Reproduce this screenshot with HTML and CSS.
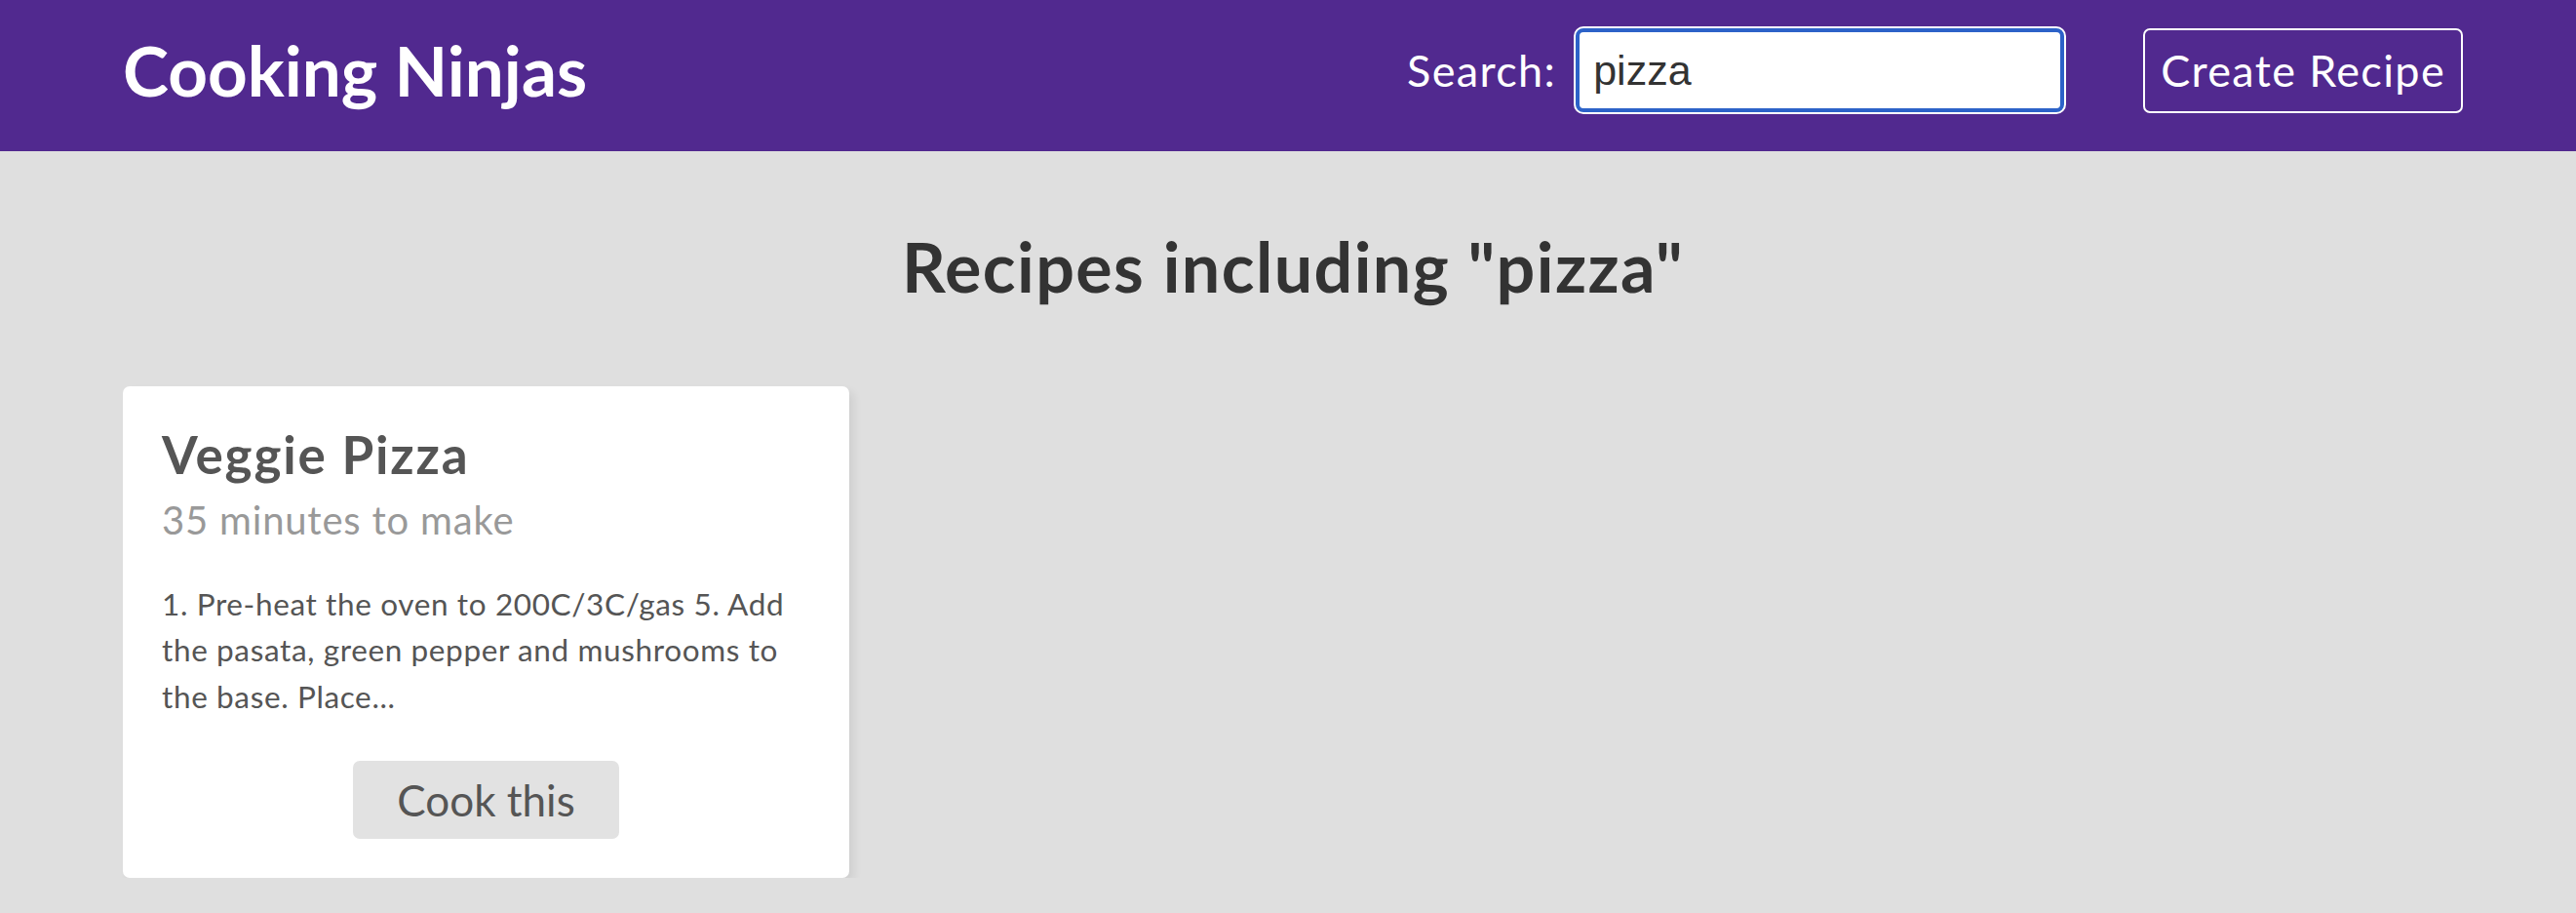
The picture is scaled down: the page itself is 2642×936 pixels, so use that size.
FILE: index.html
```html
<!DOCTYPE html>
<html lang="en">
<head>
<meta charset="utf-8">
<title>Cooking Ninjas</title>
<link rel="stylesheet" href="styles.css">
</head>
<body>
  <nav class="navbar">
    <div class="navbar-inner">
      <h1 class="logo">Cooking Ninjas</h1>
      <form class="searchbar">
        <label class="search-label" for="search">Search:</label>
        <input class="search-input" id="search" type="text" value="pizza">
      </form>
      <a class="create-btn" href="#">Create Recipe</a>
    </div>
  </nav>

  <main class="page">
    <h2 class="page-title">Recipes including "pizza"</h2>
    <div class="recipe-list">
      <div class="card">
        <h3 class="card-title">Veggie Pizza</h3>
        <p class="card-time">35 minutes to make</p>
        <p class="card-method">1. Pre-heat the oven to 200C/3C/gas 5. Add the pasata, green pepper and mushrooms to the base. Place...</p>
        <div class="card-actions">
          <a class="cook-btn" href="#">Cook this</a>
        </div>
      </div>
    </div>
  </main>
</body>
</html>
```

FILE: styles.css
```css
* {
  box-sizing: border-box;
}

html, body {
  margin: 0;
  padding: 0;
}

body {
  background: #dfdfdf;
  font-family: "Lato", "Open Sans", sans-serif;
  color: #333;
}

.navbar {
  background: #51298f;
  height: 155px;
  padding: 0 116px 11px 126px;
}

.navbar-inner {
  height: 100%;
  display: flex;
  align-items: center;
}

.logo {
  margin: 0;
  font-size: 71px;
  line-height: 1.2;
  font-weight: 700;
  color: #fff;
}

.searchbar {
  margin: 0 0 0 auto;
  display: flex;
  align-items: center;
  gap: 20px;
}

.search-label {
  color: #fff;
  font-size: 45px;
  letter-spacing: 0.03em;
  line-height: 1.2;
}

.search-input {
  width: 501px;
  height: 86px;
  border: 4px solid #2c62c8;
  border-radius: 8px;
  box-shadow: 0 0 0 2px #fff;
  outline: none;
  background: #fff;
  padding: 0 14px;
  font-family: "Liberation Sans", Arial, sans-serif;
  font-size: 43px;
  color: #333;
}

.create-btn {
  margin-left: 81px;
  display: block;
  border: 2px solid #fff;
  border-radius: 7px;
  padding: 0 16px;
  line-height: 83px;
  font-size: 45px;
  letter-spacing: 0.03em;
  color: #fff;
  text-decoration: none;
}

.page {
  padding: 0 116px 0 126px;
}

.page-title {
  margin: 76px 0 81px;
  text-align: center;
  font-size: 70px;
  line-height: 1.2;
  font-weight: 700;
  letter-spacing: 0.02em;
  color: #333;
}

.recipe-list {
  display: grid;
  grid-template-columns: repeat(3, 745px);
  gap: 82px;
}

.card {
  background: #fff;
  border-radius: 7px;
  padding: 38px 40px 40px;
  box-shadow: 5px 5px 8px rgba(0, 0, 0, 0.07);
}

.card-title {
  margin: 0;
  font-size: 53px;
  line-height: 1.2;
  font-weight: 700;
  letter-spacing: 0.035em;
  color: #555;
}

.card-time {
  margin: 11px 0 0;
  font-size: 40px;
  line-height: 1.2;
  letter-spacing: 0.02em;
  color: #999;
}

.card-method {
  margin: 39px 0 0;
  font-size: 31.5px;
  line-height: 47.7px;
  letter-spacing: 0.02em;
  color: #555;
}

.card-actions {
  margin-top: 41px;
  display: flex;
  justify-content: center;
}

.cook-btn {
  display: block;
  background: #e2e2e2;
  border-radius: 7px;
  padding: 0 45px;
  line-height: 80px;
  font-size: 44px;
  color: #555;
  text-decoration: none;
}
```
